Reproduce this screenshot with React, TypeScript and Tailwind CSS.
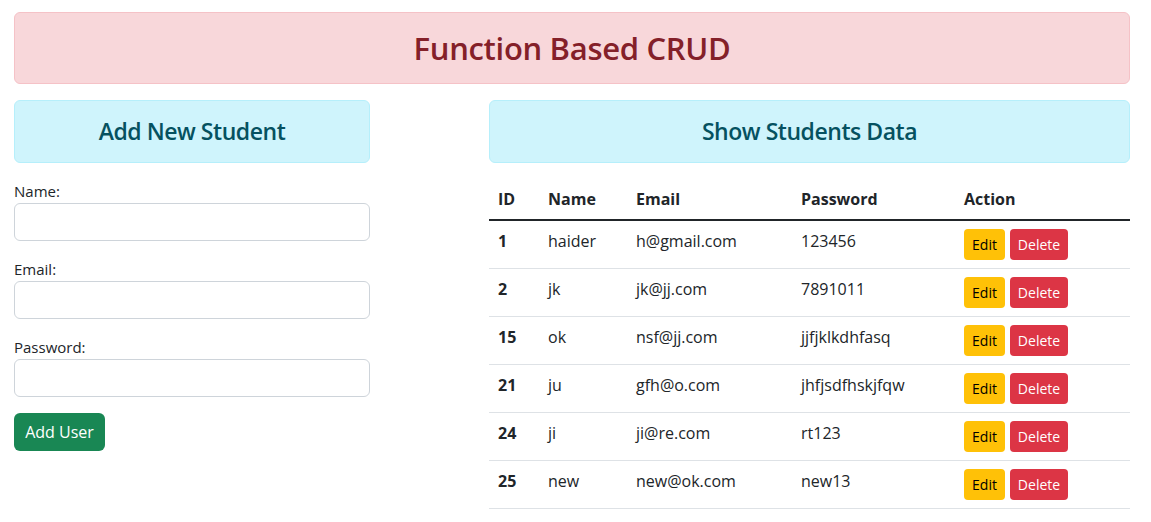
import { useState } from "react";

type Student = {
  id: number;
  name: string;
  email: string;
  password: string;
};

const students: Student[] = [
  { id: 1, name: "haider", email: "h@gmail.com", password: "123456" },
  { id: 2, name: "jk", email: "jk@jj.com", password: "7891011" },
  { id: 15, name: "ok", email: "nsf@jj.com", password: "jjfjklkdhfasq" },
  { id: 21, name: "ju", email: "gfh@o.com", password: "jhfjsdfhskjfqw" },
  { id: 24, name: "ji", email: "ji@re.com", password: "rt123" },
  { id: 25, name: "new", email: "new@ok.com", password: "new13" },
];

const App = () => {
  const [formData, setFormData] = useState({ name: "", email: "", password: "" });

  const handleInputChange = (field: keyof typeof formData, value: string) => {
    setFormData((prev) => ({ ...prev, [field]: value }));
  };

  return (
    <div
      className="min-h-screen bg-white px-[14px] pt-[12px] text-[#212529]"
      style={{ fontFamily: '"Open Sans", "Noto Sans", sans-serif' }}
    >
      <div className="w-[1116px]">
        <div className="rounded-[6px] border border-[#f5c2c7] bg-[#f8d7da] p-4 text-center">
          <h2 className="text-[31px] leading-[38px] font-semibold tracking-[-0.01em] text-[#842029]">
            Function Based CRUD
          </h2>
        </div>

        <div className="mt-[16px] flex justify-between">
          {/* add form */}
          <div className="w-[356px]">
            <div className="rounded-[6px] border border-[#b6effb] bg-[#cff4fc] p-4 text-center">
              <h4 className="text-[23px] leading-[29px] font-semibold tracking-[-0.02em] text-[#055160]">
                Add New Student
              </h4>
            </div>
            <form className="mt-[16px]" onSubmit={(e) => e.preventDefault()}>
              <div className="mb-4">
                <label htmlFor="name" className="block text-[15px] leading-6">
                  Name:
                </label>
                <input
                  id="name"
                  value={formData.name}
                  onChange={(e) => handleInputChange("name", e.target.value)}
                  className="block h-[38px] w-full rounded-[6px] border border-[#ced4da] px-3"
                />
              </div>
              <div className="mb-4">
                <label htmlFor="email" className="block text-[15px] leading-6">
                  Email:
                </label>
                <input
                  id="email"
                  type="email"
                  value={formData.email}
                  onChange={(e) => handleInputChange("email", e.target.value)}
                  className="block h-[38px] w-full rounded-[6px] border border-[#ced4da] px-3"
                />
              </div>
              <div className="mb-4">
                <label htmlFor="password" className="block text-[15px] leading-6">
                  Password:
                </label>
                <input
                  id="password"
                  type="password"
                  value={formData.password}
                  onChange={(e) => handleInputChange("password", e.target.value)}
                  className="block h-[38px] w-full rounded-[6px] border border-[#ced4da] px-3"
                />
              </div>
              <button
                type="submit"
                className="h-[38px] w-[91px] rounded-[6px] bg-[#198754] text-[16px] text-white"
              >
                Add User
              </button>
            </form>
          </div>

          {/* table */}
          <div className="w-[641px]">
            <div className="rounded-[6px] border border-[#b6effb] bg-[#cff4fc] p-4 text-center">
              <h4 className="text-[23px] leading-[29px] font-semibold tracking-[-0.02em] text-[#055160]">
                Show Students Data
              </h4>
            </div>
            <table className="mt-[16px] w-full border-collapse text-left text-[16px] leading-6">
              <thead>
                <tr className="border-b-2 border-[#212529]">
                  <th className="w-[50px] p-2 pl-[9px] font-bold">ID</th>
                  <th className="w-[88px] p-2 pl-[9px] font-bold">Name</th>
                  <th className="w-[165px] p-2 pl-[9px] font-bold">Email</th>
                  <th className="w-[163px] p-2 pl-[9px] font-bold">Password</th>
                  <th className="p-2 pl-[9px] font-bold">Action</th>
                </tr>
              </thead>
              <tbody>
                {students.map((s) => (
                  <tr key={s.id} className="border-b border-[#dee2e6] align-top">
                    <th className="p-2 pl-[9px] font-bold">{s.id}</th>
                    <td className="p-2 pl-[9px]">{s.name}</td>
                    <td className="p-2 pl-[9px]">{s.email}</td>
                    <td className="p-2 pl-[9px]">{s.password}</td>
                    <td className="p-2 pl-[9px]">
                      <div className="flex gap-[5px]">
                        <button className="h-[31px] w-[41px] rounded-[4px] bg-[#ffc107] text-[14px] text-black">
                          Edit
                        </button>
                        <button className="h-[31px] w-[58px] rounded-[4px] bg-[#dc3545] text-[14px] text-white">
                          Delete
                        </button>
                      </div>
                    </td>
                  </tr>
                ))}
              </tbody>
            </table>
          </div>
        </div>
      </div>
    </div>
  );
};

export default App;
